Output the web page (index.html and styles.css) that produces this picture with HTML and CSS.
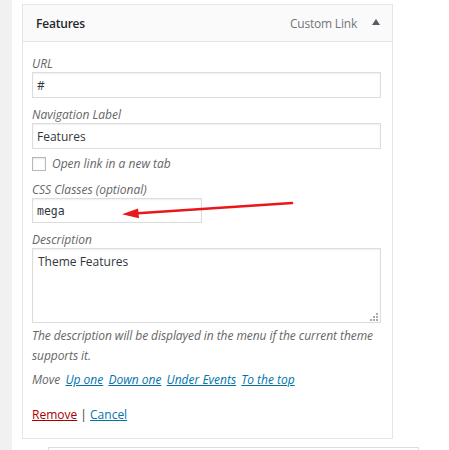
FILE: index.html
```html
<!DOCTYPE html>
<html>
<head>
<meta charset="utf-8">
<link rel="stylesheet" href="styles.css">
</head>
<body>
<div class="page">
  <div class="strip"></div>
  <div class="main">
    <div class="panel">
      <div class="head">
        <span class="title">Features</span>
        <span class="type">Custom Link</span>
        <span class="toggle"></span>
      </div>
      <div class="settings">
        <label class="lbl lbl-first">URL</label>
        <input class="inp wide" type="text" value="#">
        <label class="lbl">Navigation Label</label>
        <input class="inp wide" type="text" value="Features">
        <label class="check"><span class="box"></span><span>Open link in a new tab</span></label>
        <label class="lbl lbl-css">CSS Classes (optional)</label>
        <div class="cssrow">
          <input class="inp narrow mono" type="text" value="mega">
          <svg class="arrow" width="180" height="24" viewBox="0 0 180 24">
            <line x1="172" y1="5" x2="14" y2="15.5" stroke="#e8171b" stroke-width="2.6" stroke-linecap="round"/>
            <polygon points="2,16.3 18,10.6 19,20.2" fill="#e8171b"/>
          </svg>
        </div>
        <label class="lbl lbl-desc">Description</label>
        <div class="ta-wrap">
          <textarea class="ta">Theme Features</textarea>
          <span class="grip">
            <i style="left:6px;top:0"></i>
            <i style="left:3px;top:3px"></i><i style="left:6px;top:3px"></i>
            <i style="left:0;top:6px"></i><i style="left:3px;top:6px"></i><i style="left:6px;top:6px"></i>
          </span>
        </div>
        <p class="help">The description will be displayed in the menu if the current theme supports it.</p>
        <p class="move">Move <a href="#">Up one</a> <a href="#">Down one</a> <a href="#">Under Events</a> <a href="#">To the top</a></p>
        <p class="actions"><a class="remove" href="#">Remove</a> | <a class="cancel" href="#">Cancel</a></p>
      </div>
    </div>
    <div class="next"></div>
  </div>
</div>
</body>
</html>
```
FILE: styles.css
```css
* { box-sizing: border-box; }
html, body { margin: 0; padding: 0; background: #fff; }
body {
  font-family: "Open Sans", "Noto Sans", sans-serif;
  font-size: 12px;
  color: #23282d;
}
.page {
  display: flex;
  height: 450px;
  overflow: hidden;
}
.strip {
  width: 12px;
  flex: none;
  background: #f1f1f1;
}
.main {
  padding: 4px 0 0 10px;
  flex: 1;
}
.panel {
  width: 371px;
  border: 1px solid #e5e5e5;
  background: #fff;
}
.head {
  height: 37px;
  background: #fafafa;
  border-bottom: 1px solid #e5e5e5;
  display: flex;
  align-items: center;
  padding: 0 12px 0 13px;
}
.title {
  font-weight: 600;
  color: #23282d;
  flex: 1;
  letter-spacing: -0.2px;
}
.type {
  color: #72777c;
  margin-right: 15px;
  letter-spacing: -0.2px;
}
.toggle {
  width: 0; height: 0;
  border-left: 4px solid transparent;
  border-right: 4px solid transparent;
  border-bottom: 6px solid #555d66;
  margin-top: -2px;
}
.settings {
  padding: 0 11px 0 9px;
  display: flex;
  flex-direction: column;
  align-items: flex-start;
}
.lbl {
  display: block;
  font-style: italic;
  color: #666;
  line-height: 16px;
  margin-top: 9px;
}
.lbl-first { margin-top: 14px; }
.inp {
  height: 26px;
  border: 1px solid #ddd;
  box-shadow: inset 0 1px 2px rgba(0,0,0,.07);
  font-family: inherit;
  font-size: 12px;
  color: #32373c;
  padding: 0 4px;
  margin: 0;
  outline: none;
  background: #fff;
}
.wide { width: 349px; }
.narrow { width: 170px; height: 25px; }
.mono { font-family: "DejaVu Sans Mono", "Liberation Mono", monospace; font-size: 11.5px; }
.check {
  display: flex;
  align-items: center;
  margin-top: 7px;
  font-style: italic;
  color: #666;
  line-height: 16px;
}
.box {
  width: 14px; height: 14px;
  border: 1px solid #b4b9be;
  box-shadow: inset 0 1px 2px rgba(0,0,0,.1);
  margin-right: 6px;
  background: #fff;
}
.lbl-css { margin-top: 10px; }
.lbl-desc { margin-top: 9px; }
.cssrow { position: relative; }
.arrow {
  position: absolute;
  left: 88px;
  top: 0;
}
.ta-wrap { position: relative; }
.ta {
  display: block;
  width: 349px;
  height: 75px;
  border: 1px solid #ddd;
  box-shadow: inset 0 1px 2px rgba(0,0,0,.07);
  font-family: inherit;
  font-size: 12px;
  color: #32373c;
  padding: 4px 5px;
  margin: 0;
  resize: none;
  outline: none;
}
.grip {
  position: absolute;
  right: 3px;
  bottom: 2px;
  width: 8px;
  height: 8px;
}
.grip i {
  position: absolute;
  width: 2px; height: 2px;
  background: #aaa;
}
.help {
  margin: 3px 0 0;
  font-style: italic;
  color: #666;
  line-height: 20px;
  width: 349px;
  letter-spacing: -0.07px;
}
.move {
  margin: 4px 0 0;
  font-style: italic;
  color: #666;
  line-height: 20px;
}
.move a { color: #0073aa; margin-left: 2px; }
.actions {
  margin: 15px 0 13px;
  line-height: 20px;
  color: #32373c;
}
a { color: #0073aa; text-decoration: underline; }
.remove { color: #a00; }
.next {
  margin: 8px 0 0 26px;
  width: 371px;
  height: 40px;
  border: 1px solid #ddd;
}
```
